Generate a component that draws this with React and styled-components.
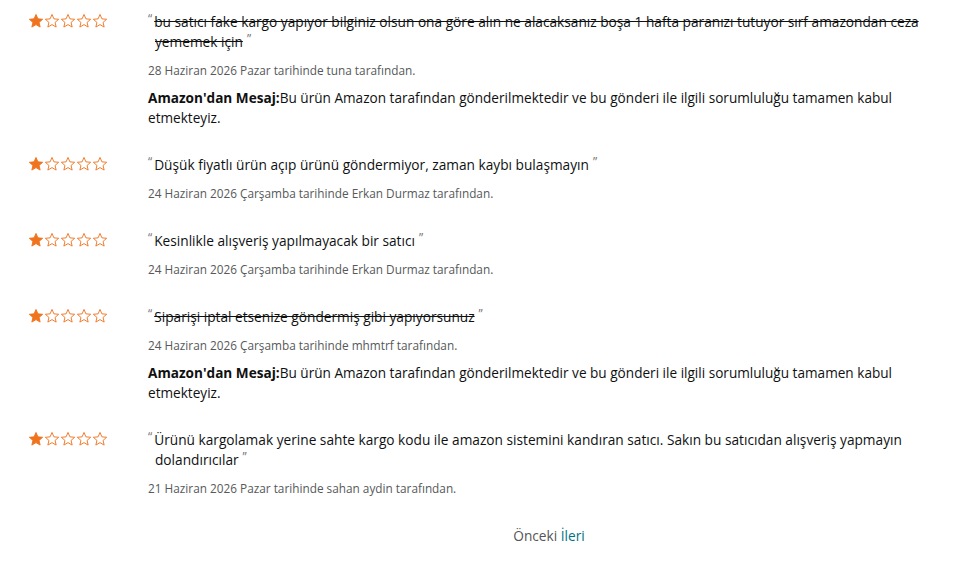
import React from "react";
import styled, { createGlobalStyle } from "styled-components";

const GlobalStyle = createGlobalStyle`
    body {
        margin: 0;
        background: #fff;
        font-family: "Open Sans", "Noto Sans", Arial, sans-serif;
        color: #0f1111;
    }
`;

const Page = styled.div`
    padding: 12px 10px 0 28px;
`;

const Review = styled.div`
    display: grid;
    grid-template-columns: 120px 1fr;
    margin-bottom: 28px;
`;

const Stars = styled.div`
    display: flex;
    padding-top: 1px;
    height: 16px;
`;

const Body = styled.div`
    display: flex;
    flex-direction: column;
`;

const Text = styled.div`
    font-size: 13.7px;
    line-height: 20px;
    padding-left: 7px;
    text-indent: -7px;
`;

const Quote = styled.span`
    color: #767676;
    font-size: 12px;
    vertical-align: top;
    line-height: 14px;
    display: inline-block;
    text-indent: 0;
    margin: ${(p) => (p.$close ? "0 0 0 4px" : "0 2px 0 0")};
`;

const Content = styled.span`
    text-decoration: ${(p) => (p.$struck ? "line-through" : "none")};
`;

const Meta = styled.div`
    margin: 10px 0 2px;
    font-size: 11.8px;
    line-height: 16px;
    color: #565959;
`;

const Reply = styled.div`
    margin: 8px 0 -1px;
    font-size: 13.6px;
    line-height: 20px;

    b {
        font-weight: 700;
    }
`;

const Pager = styled.div`
    display: grid;
    grid-template-columns: 120px 1fr;
    font-size: 13.7px;
    line-height: 20px;
    margin-top: 3px;
`;

const PagerLinks = styled.div`
    text-align: center;
    color: #555;
`;

const NextLink = styled.a`
    color: #007185;
    text-decoration: none;
`;

function Star({ filled }) {
    return (
        <svg width="16" height="16" viewBox="0 0 24 24">
            <path
                d="M12 2.2l2.9 6.6 7.1.6-5.4 4.7 1.6 7-6.2-3.7-6.2 3.7 1.6-7L2 9.4l7.1-.6z"
                fill={filled ? "#f0731e" : "#fff"}
                stroke="#f0731e"
                strokeWidth="1.4"
                strokeLinejoin="round"
            />
        </svg>
    );
}

const reviews = [
    {
        text: "bu satıcı fake kargo yapıyor bilginiz olsun ona göre alın ne alacaksanız boşa 1 hafta paranızı tutuyor sırf amazondan ceza yememek için",
        struck: true,
        meta: "28 Haziran 2026 Pazar tarihinde tuna tarafından.",
        reply: true,
    },
    {
        text: "Düşük fiyatlı ürün açıp ürünü göndermiyor, zaman kaybı bulaşmayın",
        meta: "24 Haziran 2026 Çarşamba tarihinde Erkan Durmaz tarafından.",
    },
    {
        text: "Kesinlikle alışveriş yapılmayacak bir satıcı",
        meta: "24 Haziran 2026 Çarşamba tarihinde Erkan Durmaz tarafından.",
    },
    {
        text: "Siparişi iptal etsenize göndermiş gibi yapıyorsunuz",
        struck: true,
        meta: "24 Haziran 2026 Çarşamba tarihinde mhmtrf tarafından.",
        reply: true,
    },
    {
        text: "Ürünü kargolamak yerine sahte kargo kodu ile amazon sistemini kandıran satıcı. Sakın bu satıcıdan alışveriş yapmayın dolandırıcılar",
        meta: "21 Haziran 2026 Pazar tarihinde sahan aydin tarafından.",
    },
];

export default function App() {
    return (
        <Page>
            <GlobalStyle />
            {reviews.map((r, i) => (
                <Review key={i}>
                    <Stars>
                        {[0, 1, 2, 3, 4].map((s) => (
                            <Star key={s} filled={s === 0} />
                        ))}
                    </Stars>
                    <Body>
                        <Text>
                            <Quote>“</Quote>
                            <Content $struck={r.struck}>{r.text}</Content>
                            <Quote $close>”</Quote>
                        </Text>
                        <Meta>{r.meta}</Meta>
                        {r.reply && (
                            <Reply>
                                <b>Amazon'dan Mesaj:</b>Bu ürün Amazon tarafından gönderilmektedir ve bu gönderi ile ilgili sorumluluğu tamamen kabul etmekteyiz.
                            </Reply>
                        )}
                    </Body>
                </Review>
            ))}
            <Pager>
                <span />
                <PagerLinks>
                    Önceki <NextLink href="#">İleri</NextLink>
                </PagerLinks>
            </Pager>
        </Page>
    );
}
